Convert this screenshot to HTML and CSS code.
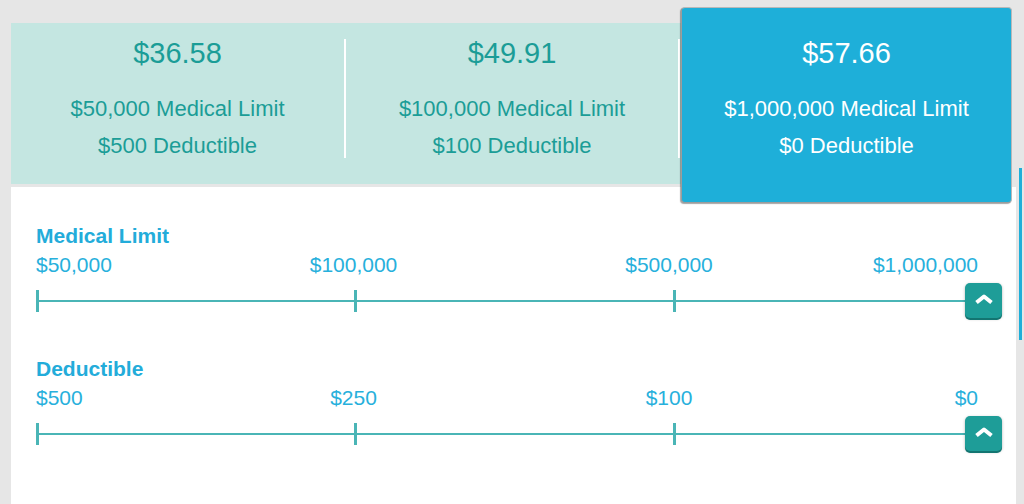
FILE: index.html
```html
<!DOCTYPE html>
<html lang="en">
<head>
    <meta charset="UTF-8">
    <meta name="viewport" content="width=device-width, initial-scale=1.0">
    <title>Coverage Options</title>
    <link rel="stylesheet" href="styles.css">
</head>
<body>

    <div class="page">

        <!-- Plan tiers -->
        <div class="tiers">
            <div class="tier">
                <div class="tier-price">$36.58</div>
                <div class="tier-detail">$50,000 Medical Limit</div>
                <div class="tier-detail">$500 Deductible</div>
            </div>
            <div class="tier-divider"></div>
            <div class="tier middle">
                <div class="tier-price">$49.91</div>
                <div class="tier-detail">$100,000 Medical Limit</div>
                <div class="tier-detail">$100 Deductible</div>
            </div>
            <div class="tier-divider"></div>
            <div class="tier selected">
                <div class="tier-price">$57.66</div>
                <div class="tier-detail">$1,000,000 Medical Limit</div>
                <div class="tier-detail">$0 Deductible</div>
            </div>
        </div>

        <!-- Sliders -->
        <div class="options">
            <div class="slider">
                <div class="slider-title">Medical Limit</div>
                <div class="scale-labels">
                    <span class="label-start">$50,000</span>
                    <span class="label-mid">$100,000</span>
                    <span class="label-mid">$500,000</span>
                    <span class="label-end">$1,000,000</span>
                </div>
                <div class="track">
                    <span class="tick"></span>
                    <span class="segment first"></span>
                    <span class="tick"></span>
                    <span class="segment second"></span>
                    <span class="tick"></span>
                    <span class="segment last"></span>
                    <button class="knob" aria-label="Medical limit handle">
                        <svg width="20" height="12" viewBox="0 0 20 12"><polyline points="2.5,9.5 10,3.5 17.5,9.5" fill="none" stroke="#fff" stroke-width="4" stroke-linejoin="round"/></svg>
                    </button>
                </div>
            </div>

            <div class="slider">
                <div class="slider-title">Deductible</div>
                <div class="scale-labels">
                    <span class="label-start">$500</span>
                    <span class="label-mid">$250</span>
                    <span class="label-mid">$100</span>
                    <span class="label-end">$0</span>
                </div>
                <div class="track">
                    <span class="tick"></span>
                    <span class="segment first"></span>
                    <span class="tick"></span>
                    <span class="segment second"></span>
                    <span class="tick"></span>
                    <span class="segment last"></span>
                    <button class="knob" aria-label="Deductible handle">
                        <svg width="20" height="12" viewBox="0 0 20 12"><polyline points="2.5,9.5 10,3.5 17.5,9.5" fill="none" stroke="#fff" stroke-width="4" stroke-linejoin="round"/></svg>
                    </button>
                </div>
            </div>
        </div>
    </div>

    <!-- Scrollbar -->
    <div class="scrollbar">
        <div class="scroll-thumb"></div>
    </div>

</body>
</html>
```

FILE: styles.css
```css
body {
    font-family: "Liberation Sans", Arial, sans-serif;
    margin: 0;
    height: 504px;
    overflow: hidden;
    background-color: #e6e6e6;
    display: flex;
}

.page {
    width: 1005px;
    flex-shrink: 0;
    margin-left: 11px;
    padding-top: 23px;
    display: flex;
    flex-direction: column;
}

/* Tiers */

.tiers {
    display: flex;
    align-items: flex-start;
    background-color: #c4e6e1;
    margin-right: 5px;
}

.tier {
    width: 333px;
    flex-shrink: 0;
    text-align: center;
    color: #1b9d97;
    padding: 13px 0 20px;
}

.tier.middle {
    width: 332px;
}

.tier-divider {
    width: 2px;
    flex-shrink: 0;
    height: 119px;
    margin-top: 16px;
    background-color: #fff;
}

.tier-price {
    font-size: 29px;
    line-height: 34px;
    margin-bottom: 20px;
}

.tier-detail {
    font-size: 22px;
    line-height: 37px;
    white-space: nowrap;
}

.tier.selected {
    position: relative;
    z-index: 1;
    width: 329px;
    margin: -16px 0 -19px 1px;
    padding: 28px 0 38px;
    background-color: #1eafd9;
    color: #fff;
    border: 1px solid #9c9c9c;
    border-top-color: #b8b8b8;
    border-right-color: #b8b8b8;
    border-radius: 4px;
    box-shadow: -1px 1px 1px rgba(0, 0, 0, 0.35);
}

/* Sliders */

.options {
    flex: 1;
    margin-top: 3px;
    background-color: #fff;
    padding: 37px 14px 0 25px;
}

.slider {
    margin-bottom: 39px;
}

.slider-title {
    font-size: 21px;
    line-height: 24px;
    font-weight: bold;
    color: #23acda;
}

.scale-labels {
    display: grid;
    grid-template-columns: 160px 315px 316px 151px;
    margin-top: 5px;
    font-size: 21px;
    line-height: 24px;
    color: #27b0dc;
}

.label-start {
    text-align: left;
}

.label-mid {
    text-align: center;
}

.label-end {
    text-align: right;
}

.track {
    display: flex;
    align-items: center;
    height: 35px;
    margin-top: 6px;
}

.tick {
    width: 3px;
    height: 22px;
    background-color: #4ab5b6;
}

.segment {
    height: 2px;
    background-color: #4ab5b6;
}

.segment.first {
    width: 315px;
}

.segment.second {
    width: 316px;
}

.segment.last {
    flex: 1;
}

.knob {
    width: 37px;
    height: 35px;
    padding: 0 0 4px;
    border: none;
    border-radius: 5px;
    background-color: #1e9d98;
    box-shadow: 0 2px 0 #137571, 0 1px 3px rgba(0, 0, 0, 0.3);
    display: flex;
    align-items: center;
    justify-content: center;
    cursor: pointer;
}

/* Scrollbar */

.scrollbar {
    width: 8px;
    padding-left: 3px;
    box-sizing: border-box;
}

.scroll-thumb {
    width: 3px;
    height: 172px;
    margin-top: 168px;
    background-color: #1eafd9;
}
```
